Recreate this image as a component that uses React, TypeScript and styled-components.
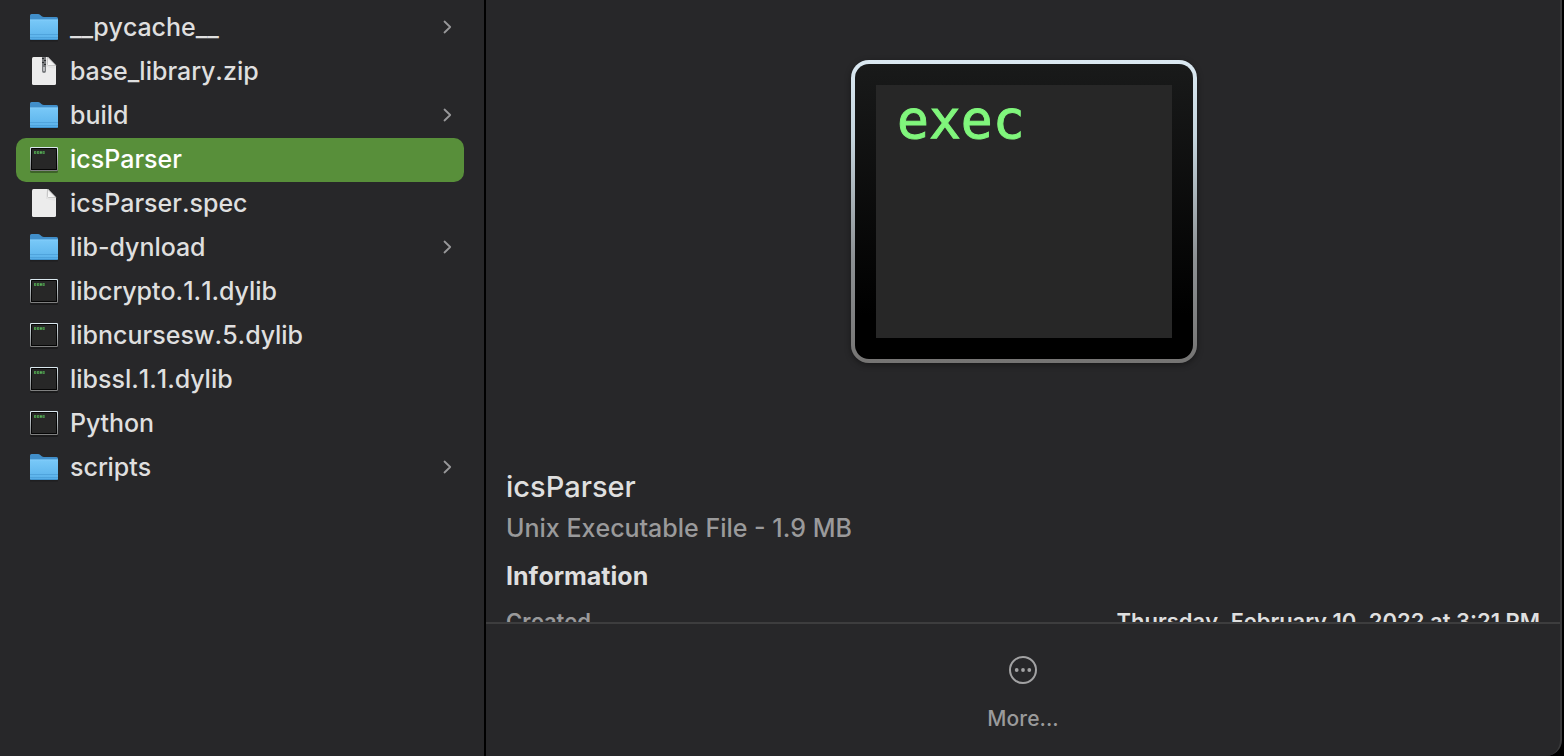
import React from "react";
import styled, { createGlobalStyle } from "styled-components";

const GlobalStyle = createGlobalStyle`
  *, *::before, *::after { box-sizing: border-box; }
  body {
    margin: 0;
    background: #000;
    color: #dfdfdf;
    font-family: Inter, "Liberation Sans", sans-serif;
    font-kerning: none;
    -webkit-font-smoothing: antialiased;
  }
  button { font: inherit; font-kerning: inherit; color: inherit; border: 0; background: none; padding: 0; }
`;

const Window = styled.div`
  display: grid;
  grid-template-columns: 486px minmax(0, 1fr);
  height: 100vh;
  margin-right: 2px;
  overflow: hidden;
  background: #272729;
  border-right: 2px solid #3a3a3b;
  border-bottom-right-radius: 16px;
`;

const Column = styled.nav`
  border-right: 2px solid #000;
  padding: 6px 20px 0 16px;
  overflow: hidden;
`;

const FileList = styled.ul`
  list-style: none;
  margin: 0;
  padding: 0;
`;

const FileRow = styled.button<{ $selected: boolean }>`
  display: flex;
  align-items: center;
  gap: 10px;
  width: 100%;
  height: 44px;
  padding: 0 10px 2px 12px;
  border-radius: 10px;
  text-align: left;
  background: ${(p) => (p.$selected ? "#588f3a" : "transparent")};
  color: ${(p) => (p.$selected ? "#fff" : "#dfdfdf")};
`;

const FileName = styled.span`
  flex: 1;
  font-size: 25px;
  line-height: 30px;
  font-weight: 500;
`;

const Preview = styled.main`
  display: flex;
  flex-direction: column;
  min-height: 0;
  min-width: 0;
`;

const Details = styled.section`
  flex: 1;
  min-height: 0;
  overflow: hidden;
  padding: 0 20px;
`;

const Artwork = styled.div`
  display: flex;
  justify-content: center;
  padding: 60px 0 104px 2px;
`;

const Bezel = styled.div`
  width: 346px;
  height: 303px;
  padding: 4px;
  border-radius: 18px;
  background: linear-gradient(#dbe9f2, #c5d5de 25%, #8d9194 65%, #757473);
  box-shadow: 0 2px 6px rgba(0, 0, 0, 0.4);
`;

const Frame = styled.div`
  height: 100%;
  padding: 21px;
  border-radius: 14px;
  background: linear-gradient(#191a1a, #000 85%);
`;

const Screen = styled.div`
  height: 100%;
  padding: 6px 21px;
  background: #272727;
  color: #80f67c;
  font-family: "DejaVu Sans Mono", monospace;
  font-size: 53px;
  line-height: 58px;
  -webkit-text-stroke: 1px #80f67c;
`;

const Title = styled.h1`
  margin: 0;
  font-size: 29px;
  line-height: 40px;
  font-weight: 500;
`;

const Kind = styled.p`
  margin: 0;
  font-size: 25px;
  line-height: 42px;
  font-weight: 500;
  color: #9a9a9b;
`;

const Heading = styled.h2`
  margin: 8px 0 10px;
  font-size: 25px;
  line-height: 38px;
  font-weight: 700;
`;

const Facts = styled.dl`
  display: flex;
  justify-content: space-between;
  margin: 0;
  font-size: 22px;
  line-height: 32px;
  font-weight: 600;
`;

const Term = styled.dt`
  color: #9a9a9b;
`;

const Value = styled.dd`
  margin: 0;
`;

const Footer = styled.footer`
  display: flex;
  justify-content: center;
  height: 134px;
  padding-top: 30px;
  border-top: 2px solid #3d3d3e;
`;

const MoreButton = styled.button`
  display: flex;
  flex-direction: column;
  align-items: center;
  align-self: flex-start;
  gap: 17px;
  color: #9a9a9b;
  font-size: 21px;
  line-height: 32px;
  font-weight: 500;
`;

const FolderIcon = () => (
  <svg width="32" height="32" viewBox="0 0 32 32" aria-hidden="true">
    <defs>
      <linearGradient id="folderFront" x1="0" y1="0" x2="0" y2="1">
        <stop offset="0" stopColor="#79c9f8" />
        <stop offset="1" stopColor="#59b1ea" />
      </linearGradient>
    </defs>
    <path d="M2 29.5h28" stroke="#19191b" strokeWidth="2" opacity=".5" />
    <path d="M2 4.500q0-1.500 1.500-1.500h6.500q1.300 0 2.300 1l1.400 1.200q1 .8 2.300.8h12.500q1.500 0 1.500 1.500v10H2z" fill="#418fca" />
    <path d="M2 8.500h28v19q0 1.500-1.500 1.500h-25q-1.500 0-1.500-1.500z" fill="url(#folderFront)" />
    <path d="M2 9h28" stroke="#8bd2fb" strokeWidth="1" opacity=".5" />
    <path d="M2 23.500h28M2 26.500h28" stroke="#4598d2" strokeWidth="1" opacity=".6" />
    <path d="M2.500 28.400h27" stroke="#3e90ca" strokeWidth="1" />
  </svg>
);

const DocumentIcon = ({ zip = false }: { zip?: boolean }) => (
  <svg width="32" height="32" viewBox="0 0 32 32" aria-hidden="true">
    <defs>
      <linearGradient id="fold" x1="0" y1="1" x2="1" y2="0">
        <stop offset="0" stopColor="#fff" />
        <stop offset="1" stopColor="#d8d8d8" />
      </linearGradient>
      <linearGradient id="foldShade" x1="0" y1="0" x2="0" y2="1">
        <stop offset="0" stopColor="#a9a9a9" />
        <stop offset="1" stopColor="#ececec" />
      </linearGradient>
    </defs>
    <path d="M5.500 2H20l8 8.500v18q0 1.500-1.500 1.500h-21Q4 30 4 28.500v-25Q4 2 5.500 2z" fill="#ececec" />
    <path d="M18.500 3v7.500q0 1 1.500 1H28l-1 3-9-3z" fill="url(#foldShade)" opacity=".8" />
    <path d="M19.500 2l8.500 8.500h-7.500q-1 0-1-1z" fill="url(#fold)" stroke="#b4b4b4" strokeWidth=".7" />
    {zip && (
      <g>
        <path d="M14 2h4v14q0 2-2 2t-2-2z" fill="#77797c" />
        <path d="M14 3.500h2M16 5.500h2M14 7.500h2M16 9.500h2" stroke="#2f3032" strokeWidth="1" />
        <path d="M15 12h2v4h-2z" fill="#b8babd" />
      </g>
    )}
  </svg>
);

const ExecIcon = () => (
  <svg width="32" height="32" viewBox="0 0 32 32" aria-hidden="true">
    <defs>
      <linearGradient id="execRim" x1="0" y1="0" x2="0" y2="1">
        <stop offset="0" stopColor="#dceaf1" />
        <stop offset="1" stopColor="#7d7d7d" />
      </linearGradient>
    </defs>
    <rect x="2" y="5" width="28" height="25" rx="1.500" fill="#000" opacity=".3" />
    <rect x="2" y="4" width="28" height="24" rx="1.200" fill="url(#execRim)" />
    <rect x="3" y="5" width="26" height="22" rx=".5" fill="#050505" />
    <rect x="4" y="6" width="24" height="20" fill="#272727" />
    <path d="M6 9.500h2.300M9 9.500h2.300M11.900 9.500h2M14.500 9.500h2.200" stroke="#58b058" strokeWidth="2.400" />
    <path d="M6.600 9.500h2M9.600 9.500h2M14.800 9.500h2" stroke="#2c5a2c" strokeWidth=".6" />
  </svg>
);

const Chevron = () => (
  <svg width="14" height="16" viewBox="0 0 14 16" aria-hidden="true">
    <path d="M4.500 2.500l5.700 5.500-5.700 5.500" fill="none" stroke="#98989a" strokeWidth="1.800" strokeLinecap="round" strokeLinejoin="round" />
  </svg>
);

const MoreIcon = () => (
  <svg width="32" height="32" viewBox="0 0 32 32" aria-hidden="true">
    <circle cx="16" cy="16" r="13" fill="none" stroke="#a2a2a3" strokeWidth="2" />
    <g fill="#a2a2a3">
      <circle cx="9.700" cy="16" r="1.900" />
      <circle cx="16" cy="16" r="1.900" />
      <circle cx="22.300" cy="16" r="1.900" />
    </g>
  </svg>
);

type FileKind = "folder" | "zip" | "document" | "exec";

const files: { name: string; kind: FileKind }[] = [
  { name: "__pycache__", kind: "folder" },
  { name: "base_library.zip", kind: "zip" },
  { name: "build", kind: "folder" },
  { name: "icsParser", kind: "exec" },
  { name: "icsParser.spec", kind: "document" },
  { name: "lib-dynload", kind: "folder" },
  { name: "libcrypto.1.1.dylib", kind: "exec" },
  { name: "libncursesw.5.dylib", kind: "exec" },
  { name: "libssl.1.1.dylib", kind: "exec" },
  { name: "Python", kind: "exec" },
  { name: "scripts", kind: "folder" },
];

const FileIcon = ({ kind }: { kind: FileKind }) => {
  if (kind === "folder") return <FolderIcon />;
  if (kind === "exec") return <ExecIcon />;
  return <DocumentIcon zip={kind === "zip"} />;
};

export default function App() {
  return (
    <>
      <GlobalStyle />
      <Window>
        <Column aria-label="Files">
          <FileList>
            {files.map(({ name, kind }) => (
              <li key={name}>
                <FileRow type="button" $selected={name === "icsParser"}>
                  <FileIcon kind={kind} />
                  <FileName>{name}</FileName>
                  {kind === "folder" && <Chevron />}
                </FileRow>
              </li>
            ))}
          </FileList>
        </Column>
        <Preview>
          <Details>
            <Artwork>
              <Bezel>
                <Frame>
                  <Screen>exec</Screen>
                </Frame>
              </Bezel>
            </Artwork>
            <Title>icsParser</Title>
            <Kind>Unix Executable File - 1.9 MB</Kind>
            <Heading>Information</Heading>
            <Facts>
              <Term>Created</Term>
              <Value>Thursday, February 10, 2022 at 3:21 PM</Value>
            </Facts>
          </Details>
          <Footer>
            <MoreButton type="button">
              <MoreIcon />
              More...
            </MoreButton>
          </Footer>
        </Preview>
      </Window>
    </>
  );
}
